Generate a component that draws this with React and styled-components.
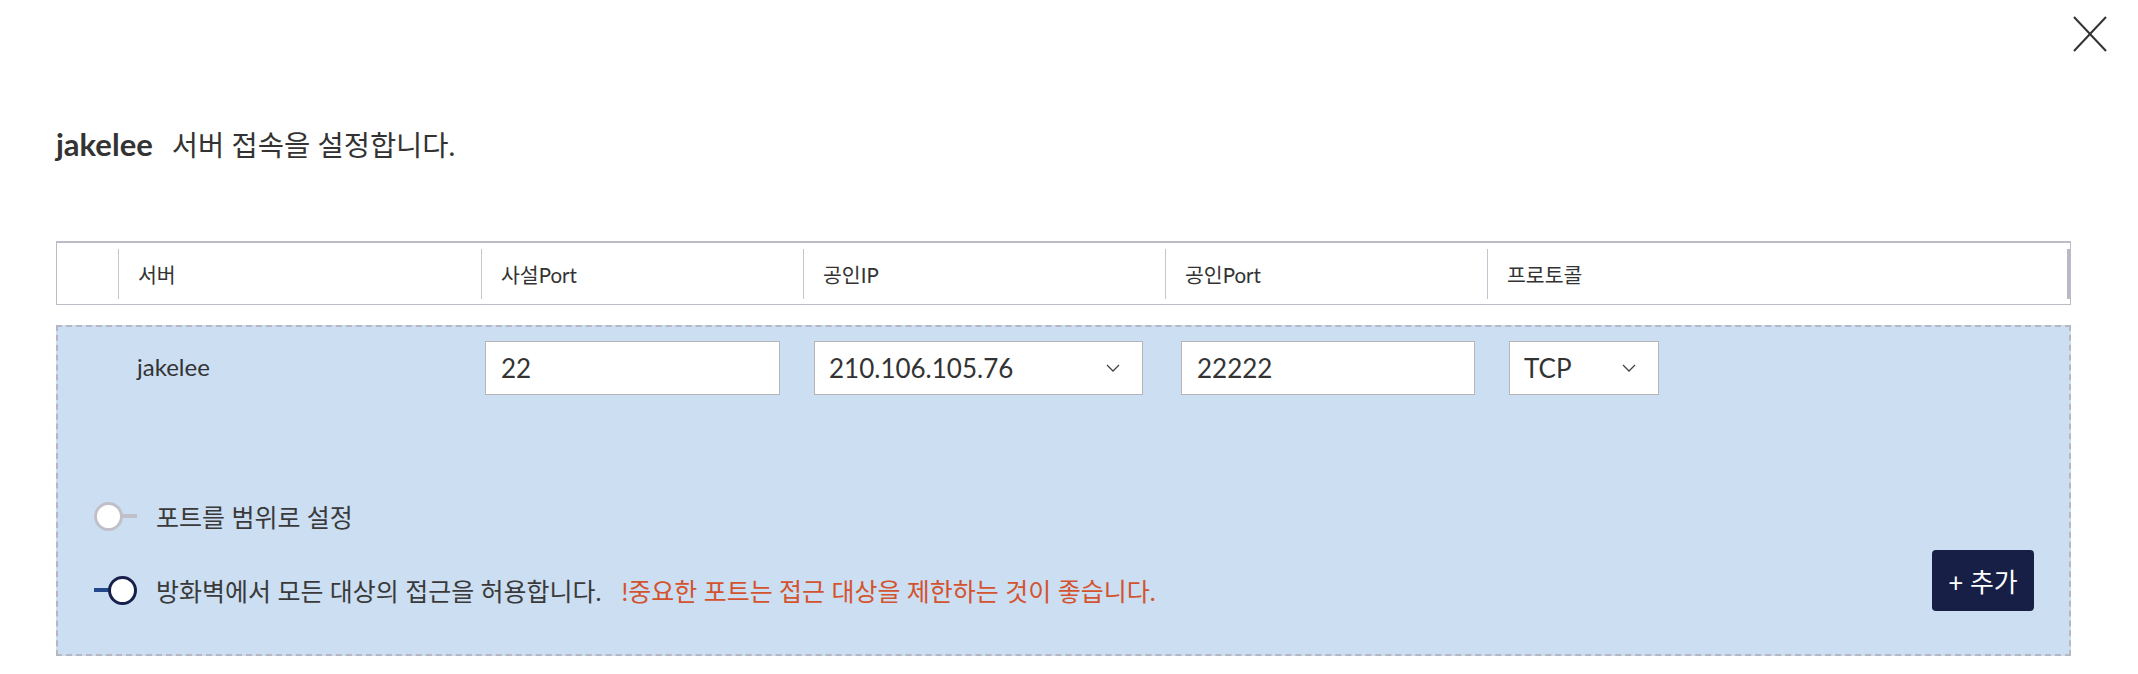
import React from "react";
import styled, { createGlobalStyle } from "styled-components";

const Global = createGlobalStyle`
  html, body { margin: 0; padding: 0; background: #ffffff; }
  body { font-family: Lato, "Noto Sans CJK KR", sans-serif; color: #333333; }
  * { box-sizing: border-box; }
`;

const FONT = `Lato, "Noto Sans CJK KR", sans-serif`;

const Page = styled.div`
  width: 2138px;
  min-height: 674px;
  background: #ffffff;
`;

const TopBar = styled.div`
  display: flex;
  justify-content: flex-end;
  padding: 16px 31px 0 0;
`;

const CloseButton = styled.button`
  width: 34px;
  height: 36px;
  padding: 0;
  border: 0;
  background: transparent;
  cursor: pointer;
  display: block;
`;

const Content = styled.div`
  padding: 0 67px 20px 56px;
`;

const Title = styled.h2`
  margin: 72px 0 0 0;
  font-family: ${FONT};
  font-weight: 400;
  font-size: 28.5px;
  line-height: 40px;
  color: #333333;
  display: flex;
  align-items: baseline;
`;

const TitleName = styled.strong`
  font-weight: 700;
  font-size: 31px;
  margin-right: 19px;
`;

const HeaderTable = styled.div`
  margin-top: 76px;
  height: 64px;
  border: 1px solid #bcbbc8;
  border-top-width: 2px;
  display: grid;
  grid-template-columns: 61px 363px 322px 362px 322px 1fr;
  align-items: center;
  background: #ffffff;
`;

const HeadCell = styled.div`
  height: 50px;
  display: flex;
  align-items: center;
  padding-left: 19px;
  font-family: ${FONT};
  font-size: 20.5px;
  color: #333333;
  border-left: ${(p) => (p.$first ? "0" : "1px solid #c6c5cf")};
  border-right: ${(p) => (p.$last ? "3px solid #b9b8c5" : "0")};
`;

const Panel = styled.div`
  margin-top: 20px;
  background: #cbdef2;
  border: 2px dashed #b7b6c3;
  padding: 14px 35px 43px 0;
`;

const FieldRow = styled.div`
  display: grid;
  grid-template-columns: 348px 329px 367px 328px auto;
  align-items: center;
  padding-left: 79px;
`;

const ServerName = styled.div`
  font-family: ${FONT};
  font-size: 24px;
  color: #333333;
  padding-bottom: 4px;
`;

const TextInput = styled.input`
  width: ${(p) => p.$w}px;
  height: 54px;
  border: 1px solid #b5b5b8;
  background: #ffffff;
  padding: 0 15px;
  font-family: ${FONT};
  font-size: 26px;
  color: #333333;
  outline: none;
`;

const SelectBox = styled.div`
  width: ${(p) => p.$w}px;
  height: 54px;
  border: 1px solid #b5b5b8;
  background: #ffffff;
  display: flex;
  align-items: center;
  justify-content: space-between;
  padding: 0 22px 0 14px;
  font-family: ${FONT};
  font-size: 26px;
  color: #333333;
`;

const BottomArea = styled.div`
  margin-top: 100px;
  padding-left: 36px;
  display: flex;
  align-items: flex-end;
  justify-content: space-between;
`;

const Options = styled.div`
  display: flex;
  flex-direction: column;
  gap: 32px;
`;

const OptionRow = styled.div`
  height: 42px;
  display: flex;
  align-items: center;
`;

const ToggleTrack = styled.span`
  width: 43px;
  height: 29px;
  display: flex;
  align-items: center;
  flex-direction: ${(p) => (p.$on ? "row-reverse" : "row")};
  flex-shrink: 0;
`;

const ToggleKnob = styled.span`
  width: 29px;
  height: 29px;
  border-radius: 50%;
  background: #ffffff;
  border: 3px solid ${(p) => (p.$on ? "#17204a" : "#c1c0c8")};
  flex-shrink: 0;
`;

const ToggleTail = styled.span`
  height: 4px;
  flex: 1;
  background: ${(p) => (p.$on ? "#23488c" : "#c1c0c8")};
  margin: ${(p) => (p.$on ? "0 -1px 0 0" : "0 0 0 -1px")};
`;

const OptionLabel = styled.span`
  margin-left: 19px;
  font-family: ${FONT};
  font-size: 25px;
  color: #3a3a3a;
`;

const Warning = styled.span`
  margin-left: 20px;
  font-family: ${FONT};
  font-size: 25px;
  color: #d4532f;
`;

const AddButton = styled.button`
  width: 102px;
  height: 61px;
  border: 0;
  border-radius: 4px;
  background: #171f47;
  color: #ffffff;
  font-family: ${FONT};
  font-size: 26px;
  cursor: pointer;
  padding: 0;
`;

function Chevron() {
  return (
    <svg width="14" height="8" viewBox="0 0 14 8" fill="none">
      <polyline points="1,1 7,7 13,1" stroke="#444" strokeWidth="1.3" />
    </svg>
  );
}

function Toggle({ on }) {
  return (
    <ToggleTrack $on={on}>
      <ToggleKnob $on={on} />
      <ToggleTail $on={on} />
    </ToggleTrack>
  );
}

export default function App() {
  return (
    <Page>
      <Global />
      <TopBar>
        <CloseButton aria-label="닫기">
          <svg width="34" height="36" viewBox="0 0 34 36">
            <line x1="1" y1="1" x2="33" y2="35" stroke="#333" strokeWidth="2" />
            <line x1="33" y1="1" x2="1" y2="35" stroke="#333" strokeWidth="2" />
          </svg>
        </CloseButton>
      </TopBar>
      <Content>
        <Title>
          <TitleName>jakelee</TitleName>
          <span>서버 접속을 설정합니다.</span>
        </Title>
        <HeaderTable>
          <HeadCell $first />
          <HeadCell>서버</HeadCell>
          <HeadCell>사설Port</HeadCell>
          <HeadCell>공인IP</HeadCell>
          <HeadCell>공인Port</HeadCell>
          <HeadCell $last>프로토콜</HeadCell>
        </HeaderTable>
        <Panel>
          <FieldRow>
            <ServerName>jakelee</ServerName>
            <TextInput $w={295} defaultValue="22" readOnly />
            <SelectBox $w={329}>
              <span>210.106.105.76</span>
              <Chevron />
            </SelectBox>
            <TextInput $w={294} defaultValue="22222" readOnly />
            <SelectBox $w={150}>
              <span>TCP</span>
              <Chevron />
            </SelectBox>
          </FieldRow>
          <BottomArea>
            <Options>
              <OptionRow>
                <Toggle on={false} />
                <OptionLabel>포트를 범위로 설정</OptionLabel>
              </OptionRow>
              <OptionRow>
                <Toggle on />
                <OptionLabel>방화벽에서 모든 대상의 접근을 허용합니다.</OptionLabel>
                <Warning>!중요한 포트는 접근 대상을 제한하는 것이 좋습니다.</Warning>
              </OptionRow>
            </Options>
            <AddButton>+ 추가</AddButton>
          </BottomArea>
        </Panel>
      </Content>
    </Page>
  );
}
